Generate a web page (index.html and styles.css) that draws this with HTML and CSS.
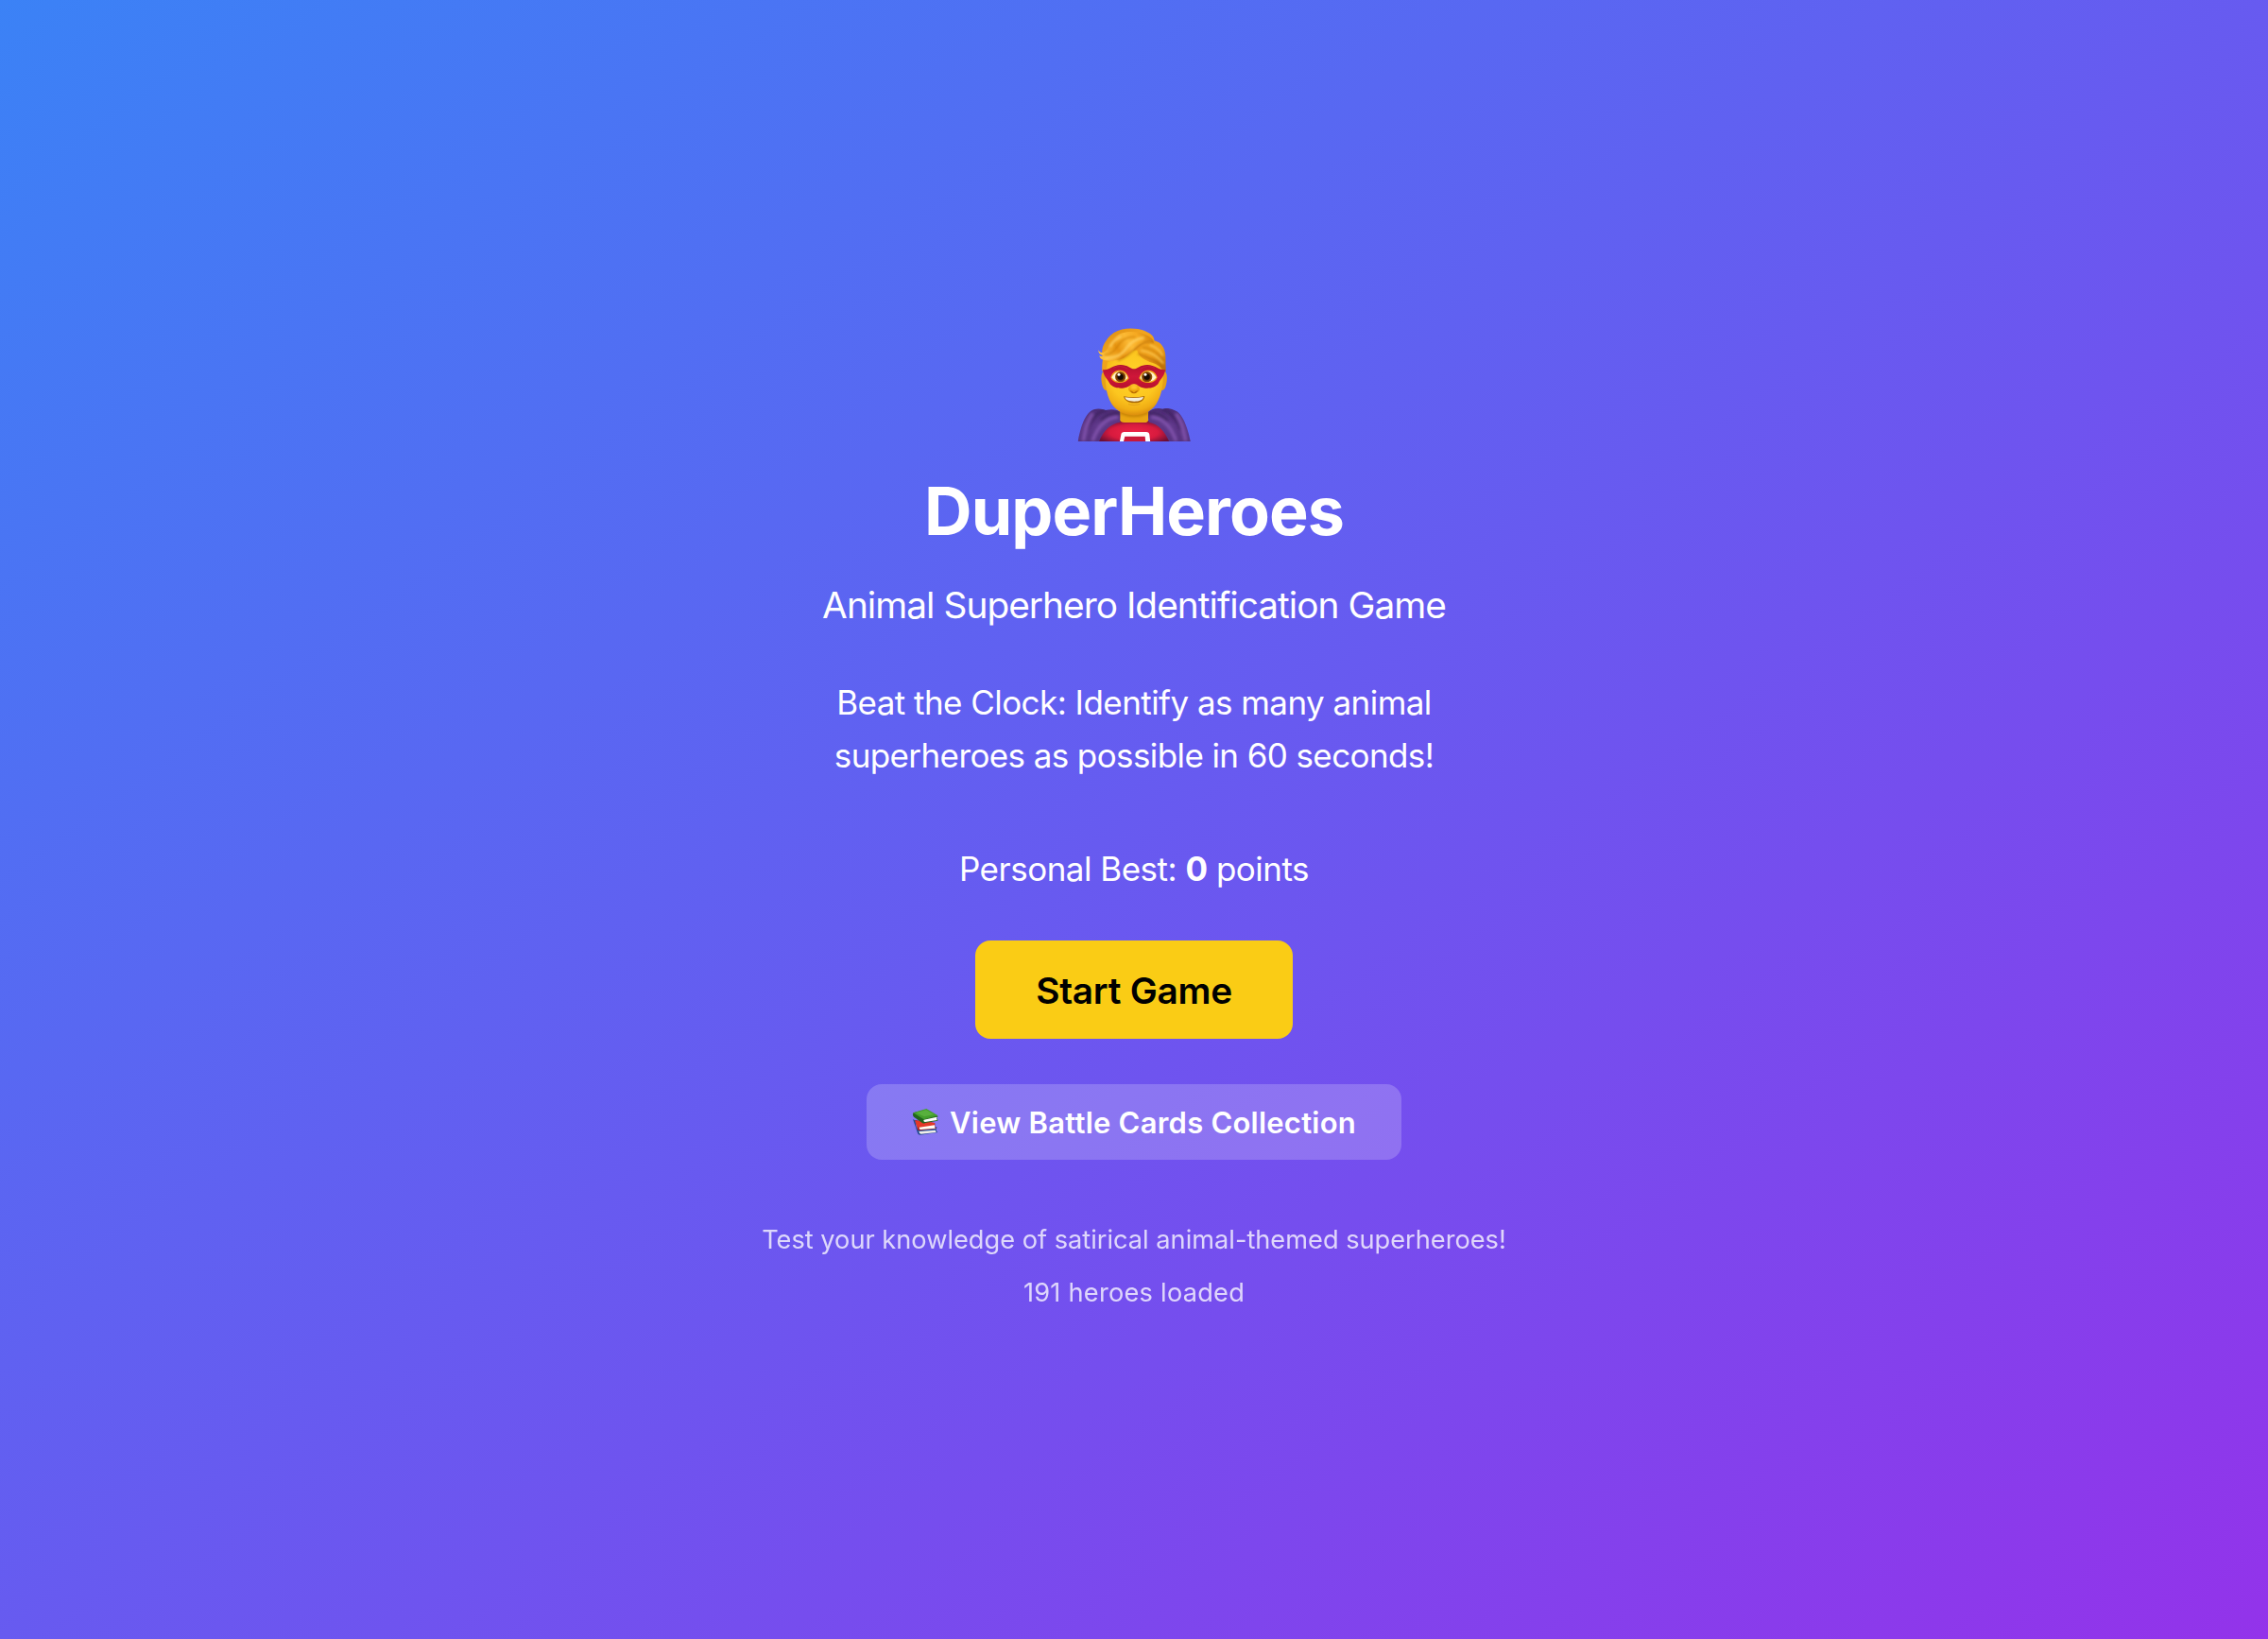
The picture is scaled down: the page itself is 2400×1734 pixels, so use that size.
FILE: index.html
```
<!DOCTYPE html>
<html lang="en">
<head>
<meta charset="utf-8">
<title>DuperHeroes</title>
<link rel="stylesheet" href="styles.css">
</head>
<body>
<main class="menu">
  <svg class="hero" viewBox="60 51 360 360" aria-hidden="true">
    <defs>
      <radialGradient id="skin" gradientUnits="userSpaceOnUse" cx="238" cy="205" r="125">
        <stop offset="0" stop-color="#ffd52b"/><stop offset=".6" stop-color="#fcc61f"/><stop offset=".85" stop-color="#f0ad14"/><stop offset="1" stop-color="#d98a0c"/>
      </radialGradient>
      <linearGradient id="hair" x1="0" y1="0" x2="1" y2="1">
        <stop offset="0" stop-color="#d98a0c"/><stop offset=".35" stop-color="#f2a51f"/><stop offset=".7" stop-color="#eb9c18"/><stop offset="1" stop-color="#b86a05"/>
      </linearGradient>
      <linearGradient id="lock" gradientUnits="userSpaceOnUse" x1="150" y1="150" x2="290" y2="60">
        <stop offset="0" stop-color="#fdc03a"/><stop offset=".3" stop-color="#e89512"/><stop offset=".55" stop-color="#fcb934"/><stop offset=".75" stop-color="#f6a921"/><stop offset="1" stop-color="#d07f0a"/>
      </linearGradient>
      <linearGradient id="mask" x1="0" y1="0" x2="0" y2="1">
        <stop offset="0" stop-color="#b01030"/><stop offset=".5" stop-color="#cf1639"/><stop offset="1" stop-color="#b8102e"/>
      </linearGradient>
      <radialGradient id="suit" cx=".5" cy=".5" r=".55">
        <stop offset="0" stop-color="#ee2448"/><stop offset=".6" stop-color="#d81a3e"/><stop offset="1" stop-color="#6d0f35"/>
      </radialGradient>
      <linearGradient id="cape" x1="0" y1="0" x2="0" y2="1">
        <stop offset="0" stop-color="#4d2c74"/><stop offset=".5" stop-color="#5f3889"/><stop offset="1" stop-color="#55317f"/>
      </linearGradient>
      <radialGradient id="iris"><stop offset="0" stop-color="#2a1000"/><stop offset=".6" stop-color="#5c2c03"/><stop offset="1" stop-color="#a35c08"/></radialGradient>
      <filter id="soft" x="-20%" y="-20%" width="140%" height="140%"><feGaussianBlur stdDeviation="2.5"/></filter>
      <filter id="softer" x="-20%" y="-20%" width="140%" height="140%"><feGaussianBlur stdDeviation="4"/></filter>
      <clipPath id="frame"><rect x="60" y="51" width="360" height="360"/></clipPath>
      <clipPath id="cape-shape"><path d="M62 414C68 372 85 318 112 310C128 304 142 309 150 312C168 307 188 309 200 320L196 350C165 355 143 375 128 414ZM420 414C412 372 395 320 368 312C352 305 340 305 331 308C314 303 293 308 283 320L287 350C318 355 338 380 353 414Z"/></clipPath>
    </defs>
    <g clip-path="url(#frame)">
      <path fill="url(#suit)" d="M125 420Q130 362 185 345H295Q348 362 355 420Z"/>
      <path fill="#fff" d="M194 415L199 389Q200 381 209 381H279Q288 381 289 389L292 415Z"/>
      <path fill="#c9183a" d="M206 415L211 395H275L277 415Z"/>
      <path fill="url(#cape)" d="M62 414C68 372 85 318 112 310C128 304 142 309 150 312C168 307 188 309 200 320L196 350C165 355 143 375 128 414Z"/>
      <path fill="url(#cape)" d="M420 414C412 372 395 320 368 312C352 305 340 305 331 308C314 303 293 308 283 320L287 350C318 355 338 380 353 414Z"/>
      <g clip-path="url(#cape-shape)"><g fill="none" stroke-linecap="round" filter="url(#softer)">
        <path stroke="#3f2163" stroke-width="9" d="M150 313C125 316 104 345 92 372M196 322C170 322 150 330 138 342M333 310C356 316 378 345 388 372M288 322C312 322 334 332 344 344"/>
        <path stroke="#7f51aa" stroke-width="11" d="M186 334C150 338 126 362 110 405M106 326C92 350 84 378 80 405M298 334C334 338 356 362 372 405M376 326C392 350 398 378 403 405"/>
      </g></g>
      <path fill="#e9a512" d="M196 300H285V344Q284 351 273 351H209Q197 351 196 343Z"/>
      <path fill="#b87506" opacity=".6" filter="url(#soft)" d="M198 308Q240 342 284 308L285 325Q240 344 196 325Z"/>
      <path fill="#e6a116" d="M145 188C133 192 135 220 141 238C146 252 155 251 157 245V190ZM336 188C348 192 346 220 340 238C335 252 326 251 324 245V190Z"/>
      <path fill="url(#skin)" d="M149 170C147 119 191 92 240 92C291 92 333 120 333 172C334 224 331 258 311 292C294 318 267 328 240 328C213 328 186 318 169 292C149 258 148 220 149 170Z"/>
      <path fill="url(#hair)" d="M139 188C138 175 139 164 141 150C136 130 139 112 146 100C153 88 160 77 176 66C205 48 245 50 272 59C291 66 306 78 304 91C327 97 337 113 340 137L341 190H332C329 177 315 166 298 161C277 155 256 143 250 122C225 120 200 135 182 152L156 158C154 167 153 180 151 190Z"/>
      <path fill="url(#lock)" d="M127 121C133 133 143 130 152 122C162 112 165 90 182 78C204 60 245 60 270 70C296 80 304 90 302 99C288 89 268 95 250 110C230 127 214 148 188 153C160 158 131 155 130 139C136 142 141 141 143 139C131 136 126 130 127 121Z"/>
      <path fill="none" stroke="#ffd363" stroke-width="8" opacity=".8" filter="url(#soft)" d="M148 146C190 148 206 130 220 110C232 95 250 84 272 82M164 112C170 96 184 84 200 77"/>
      <path fill="none" stroke="#c87908" stroke-width="5" opacity=".7" filter="url(#soft)" d="M146 137C180 134 184 108 200 94C212 83 229 78 244 80"/>
      <path fill="none" stroke="#a75e03" stroke-width="4" opacity=".75" filter="url(#soft)" d="M188 154C214 149 230 128 250 111C268 96 288 91 302 99M252 132C270 143 310 148 334 176"/>
      <path fill="none" stroke="#ffd05c" stroke-width="6" opacity=".75" filter="url(#soft)" d="M262 122C290 126 316 140 333 163M290 105C310 111 323 122 331 139"/>
      <path fill="none" stroke="#b46c08" stroke-width="3" opacity=".7" filter="url(#soft)" d="M268 112C296 116 322 134 337 158"/>
      <path fill="url(#mask)" d="M141 183C159 187 170 169 198 168C220 168 230 181 240 181C250 181 260 168 282 168C310 169 321 187 339 183C338 203 323 214 318 226C309 240 293 243 276 242C255 240 250 229 240 229C230 229 224 240 204 242C188 243 171 240 162 226C157 214 142 203 141 183Z"/>
      <path fill="none" stroke="#e64056" stroke-width="3" opacity=".3" d="M174 178Q197 166 220 181M260 181Q283 166 306 178"/>
      <path fill="#f4a818" d="M166 208C173 186 190 184 201 186C215 189 222 202 224 211C215 224 201 226 191 225C179 224 170 219 166 208ZM314 208C307 186 290 184 279 186C265 189 258 202 256 211C265 224 279 226 289 225C301 224 310 219 314 208Z"/>
      <path fill="#fff4cf" d="M169 208C178 190 190 188 200 190C212 193 218 203 220 210C210 219 201 222 191 221C180 220 174 215 169 208ZM311 208C302 190 290 188 280 190C268 193 262 203 260 210C270 219 279 222 289 221C300 220 306 215 311 208Z"/>
      <circle cx="197" cy="206" r="17" fill="url(#iris)"/><circle cx="281" cy="206" r="17" fill="url(#iris)"/>
      <circle cx="197" cy="206" r="9" fill="#180a02"/><circle cx="281" cy="206" r="9" fill="#180a02"/>
      <circle cx="192" cy="199" r="4.5" fill="#fff"/><circle cx="276" cy="199" r="4.5" fill="#fff"/>
      <path fill="#eda30e" d="M222 246C224 233 232 232 240 233C249 232 256 234 258 246C256 256 248 254 240 259C232 254 224 256 222 246Z"/>
      <ellipse cx="240" cy="239" rx="11" ry="7" fill="#ffc729" filter="url(#soft)"/>
      <path fill="#b76a03" d="M226 250Q233 250 240 256Q247 250 254 250Q248 259 240 259Q232 259 226 250Z"/>
      <path fill="#a66607" d="M207 268Q240 274 274 267C272 282 261 289 241 289C221 289 210 281 207 268Z"/>
      <path fill="#f4eedb" d="M211 271Q240 276 270 270C267 280 258 284 241 284C224 284 214 280 211 271Z"/>
      <path fill="none" stroke="#d8941a" stroke-width="2" d="M222 293Q240 299 259 293"/>
    </g>
  </svg>
  <h1 class="title">DuperHeroes</h1>
  <p class="subtitle">Animal Superhero Identification Game</p>
  <p class="description">
    <span class="line line-intro">Beat the Clock: Identify as many animal</span>
    <span class="line">superheroes as possible in 60 seconds!</span>
  </p>
  <p class="best">Personal Best: <strong>0</strong> points</p>
  <button class="start">Start Game</button>
  <button class="collection">
    <svg class="books" viewBox="34 33 90 90" aria-hidden="true">
      <path fill="#234a91" d="M37 69L44 73L49 98L113 93L111 105L116 111L61 119Q53 119 52 113Z"/>
      <path fill="#f1eee8" d="M56 107L108 101Q109 106 111 111L63 116Q57 115 56 107Z"/>
      <path fill="#315ca8" d="M49 98L81 94L113 97L110 104L57 108Z"/>
      <path fill="#b51f18" d="M43 72L50 92Q50 102 56 105L112 99L107 94V82L66 75Z"/>
      <path fill="#e43828" d="M45 75L75 76L107 81L103 91L57 95L50 93Z"/>
      <path fill="#fffdf4" d="M57 95L106 88Q106 94 108 98L61 102Q56 101 57 95Z"/>
      <path fill="#22651c" d="M38 49Q35 57 40 62L67 81Q72 84 76 81L116 74V70L112 65L117 60L76 39Z"/>
      <path fill="#fff" d="M72 71L113 62Q111 67 114 72L76 78Q69 76 72 71Z"/>
      <path fill="#439f2d" d="M38 49L80 36L117 58L72 70Z"/>
      <path fill="#73c552" d="M48 49L79 40L104 54L73 61Z" opacity=".45"/>
    </svg>
    <span>View Battle Cards Collection</span>
  </button>
  <p class="note note-first">Test your knowledge of satirical animal-themed superheroes!</p>
  <p class="note note-count">191 heroes loaded</p>
</main>
</body>
</html>
```
FILE: styles.css
```
* { box-sizing: border-box; margin: 0; }

body {
  font-family: Inter, "Liberation Sans", sans-serif;
  color: #fff;
  background: linear-gradient(to bottom right, #3b82f6, #9333ea);
}

.menu {
  min-height: 100vh;
  display: flex;
  flex-direction: column;
  align-items: center;
  justify-content: center;
  text-align: center;
  white-space: nowrap;
}

.hero {
  display: block;
  width: 120px;
  height: 120px;
  margin-bottom: 34px;
}

.title {
  font-size: 70px;
  font-weight: 700;
  line-height: 80px;
  letter-spacing: -0.94px;
  margin-bottom: 31px;
}

.subtitle {
  font-size: 38.8px;
  line-height: 56px;
  letter-spacing: -0.97px;
  margin-bottom: 47px;
}

.description,
.best {
  font-size: 35px;
  line-height: 56px;
}

.description {
  letter-spacing: -0.6px;
  margin-bottom: 64px;
}

.line { display: block; }
.line-intro { letter-spacing: -0.55px; }

.best {
  letter-spacing: -0.5px;
  margin-bottom: 48px;
}

.best strong { font-weight: 700; }

button {
  border: 0;
  border-radius: 16px;
  font-family: inherit;
  font-weight: 600;
  display: flex;
  align-items: center;
  justify-content: center;
}

.start {
  width: 336px;
  padding: 25px 0 23px;
  font-size: 38.8px;
  line-height: 56px;
  letter-spacing: -0.25px;
  color: #000;
  background: #facc15;
  margin-bottom: 48px;
}

.collection {
  width: 566px;
  height: 80px;
  gap: 10px;
  font-size: 31px;
  line-height: 48px;
  letter-spacing: 0.23px;
  color: #fff;
  background: rgba(255, 255, 255, 0.2);
  margin-bottom: 65px;
}

.collection span { padding-top: 2px; }

.books {
  width: 30px;
  height: 30px;
}

.note {
  font-size: 27.2px;
  line-height: 40px;
  opacity: 0.77;
}

.note-first { margin-bottom: 16px; }
.note-count { letter-spacing: 0.24px; margin-bottom: -1px; }
```
